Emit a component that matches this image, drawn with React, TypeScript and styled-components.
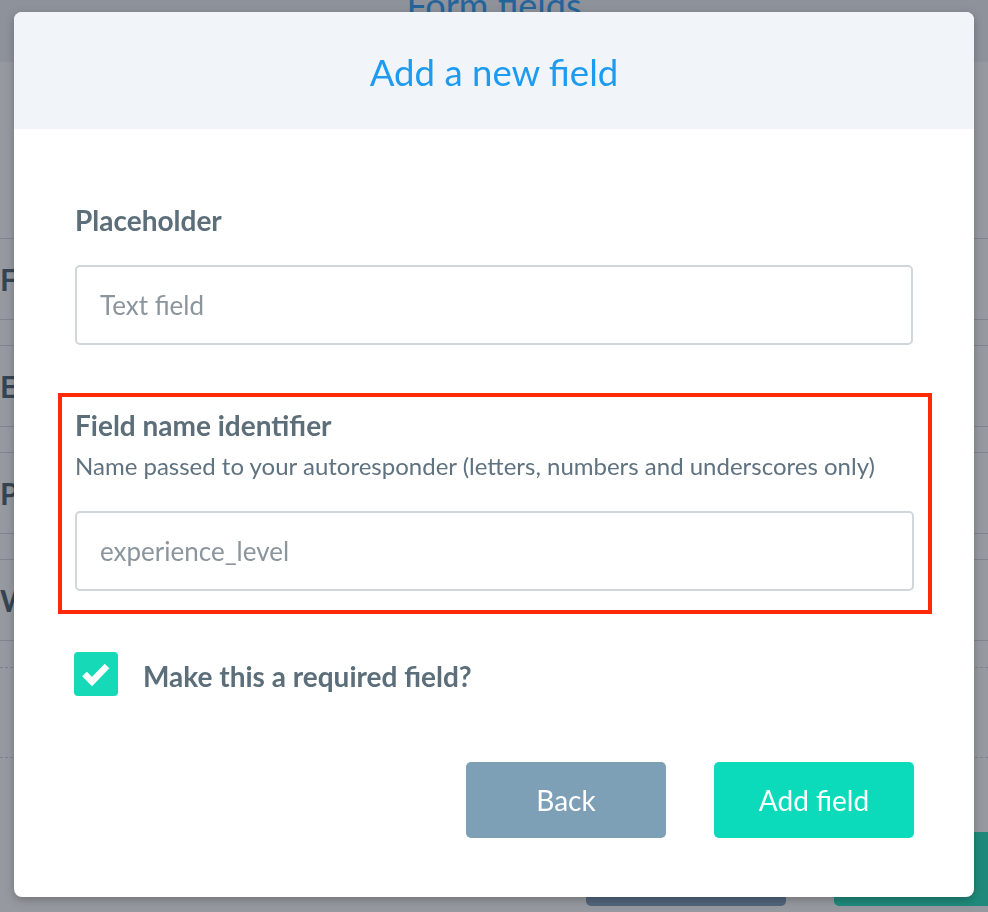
import React from "react";
import styled, { createGlobalStyle, css } from "styled-components";

const GlobalStyle = createGlobalStyle`
  html, body { margin: 0; padding: 0; }
  body {
    font-family: Lato, "Noto Sans", "Liberation Sans", sans-serif;
    background: #ffffff;
  }
  * { box-sizing: border-box; }
`;

/* ---------- page behind the dialog ---------- */

const Page = styled.div`
  position: relative;
  height: 912px;
  overflow: hidden;
  background: #ffffff;
  display: flex;
  flex-direction: column;
`;

const PageHeader = styled.header`
  height: 62px;
  flex: none;
  background: #eef2f7;
  display: flex;
  justify-content: center;
`;

const PageTitle = styled.h1`
  margin: -13px 0 0;
  font-size: 36px;
  line-height: 36px;
  font-weight: 400;
  color: #2a9cf5;
`;

const FieldList = styled.div`
  padding-top: 176px;
  display: flex;
  flex-direction: column;
  gap: 25px;
`;

const FieldRow = styled.div`
  height: 82px;
  border-top: 1px solid #d3d9df;
  border-bottom: 1px solid #d3d9df;
  display: flex;
  align-items: center;
  padding-left: 0;
  font-size: 30px;
  font-weight: 700;
  color: #4c5f6c;
  white-space: nowrap;
`;

const Dashed = styled.div<{ $gap: number }>`
  margin-top: ${(p) => p.$gap}px;
  border-top: 1px dashed #cfd5db;
`;

const PageActions = styled.div`
  margin-top: 74px;
  padding-left: 586px;
  display: flex;
  gap: 48px;
`;

const PageButton = styled.div<{ $tone: "slate" | "green" }>`
  flex: none;
  width: 200px;
  height: 74px;
  border-radius: 5px;
  background: ${(p) => (p.$tone === "slate" ? "#7d9eba" : "#1fe3bb")};
`;

/* ---------- dialog ---------- */

const Overlay = styled.div`
  position: fixed;
  inset: 0;
  background: rgba(32, 38, 50, 0.47);
  display: flex;
  justify-content: center;
  align-items: flex-start;
  padding-top: 12px;
`;

const Modal = styled.div`
  width: 960px;
  height: 885px;
  background: #ffffff;
  border-radius: 8px;
  overflow: hidden;
  box-shadow: 0 3px 10px rgba(0, 0, 0, 0.25);
  display: flex;
  flex-direction: column;
`;

const ModalHeader = styled.div`
  height: 117px;
  flex: none;
  background: #f1f5f9;
  display: flex;
  align-items: center;
  justify-content: center;
  padding-top: 2px;
`;

const ModalTitle = styled.h2`
  margin: 0;
  font-size: 36.6px;
  font-weight: 400;
  color: #1d9bf0;
`;

const ModalBody = styled.div`
  padding: 75px 61px 0;
  display: flex;
  flex-direction: column;
`;

const FieldLabel = styled.label`
  display: block;
  font-size: 28px;
  line-height: 32px;
  font-weight: 700;
  color: #5b6e79;
`;

const Hint = styled.p`
  margin: 10px 0 0;
  font-size: 24px;
  line-height: 29px;
  font-weight: 400;
  color: #5f7280;
`;

const TextInput = styled.input<{ $gap: number }>`
  display: block;
  width: 100%;
  height: 80px;
  margin-top: ${(p) => p.$gap}px;
  border: 2px solid #d1d6db;
  border-radius: 5px;
  padding: 0 23px;
  font-family: Lato, "Noto Sans", sans-serif;
  font-size: 26px;
  color: #5b6e79;
  background: #ffffff;
  outline: none;
  &::placeholder {
    color: #8b959d;
    opacity: 1;
  }
`;

const Highlight = styled.div`
  margin: 48px -19px 0 -17px;
  border: 4px solid #ff2b06;
  padding: 12px 14px 19px 13px;
`;

const CheckRow = styled.div`
  margin-top: 38px;
  margin-left: -1px;
  display: flex;
  align-items: center;
  gap: 25px;
`;

const CheckBox = styled.span`
  width: 44px;
  height: 44px;
  flex: none;
  border-radius: 4px;
  background: #16d9b8;
  display: flex;
  align-items: center;
  justify-content: center;
`;

const CheckLabel = styled.span`
  font-size: 28px;
  line-height: 32px;
  font-weight: 700;
  color: #5b6e79;
  padding-top: 3px;
`;

const Actions = styled.div`
  margin-top: 66px;
  margin-right: -1px;
  display: flex;
  justify-content: flex-end;
  gap: 48px;
`;

const Button = styled.button<{ $variant: "back" | "primary" }>`
  width: 200px;
  height: 76px;
  border: none;
  border-radius: 5px;
  font-family: Lato, "Noto Sans", sans-serif;
  font-size: 28px;
  font-weight: 400;
  color: #ffffff;
  cursor: pointer;
  ${(p) =>
    p.$variant === "back"
      ? css`
          background: #7ea0b7;
        `
      : css`
          background: #0bdbbb;
        `}
`;

export default function App() {
  return (
    <>
      <GlobalStyle />
      <Page>
        <PageHeader>
          <PageTitle>Form fields</PageTitle>
        </PageHeader>
        <FieldList>
          <FieldRow>Full name</FieldRow>
          <FieldRow>Email address</FieldRow>
          <FieldRow>Phone number</FieldRow>
          <FieldRow>Website</FieldRow>
        </FieldList>
        <Dashed $gap={26} />
        <Dashed $gap={89} />
        <PageActions>
          <PageButton $tone="slate" />
          <PageButton $tone="green" />
        </PageActions>
      </Page>

      <Overlay>
        <Modal role="dialog" aria-labelledby="dlg-title">
          <ModalHeader>
            <ModalTitle id="dlg-title">Add a new field</ModalTitle>
          </ModalHeader>
          <ModalBody>
            <FieldLabel htmlFor="ph">Placeholder</FieldLabel>
            <TextInput id="ph" $gap={29} placeholder="Text field" />

            <Highlight>
              <FieldLabel htmlFor="fid">Field name identifier</FieldLabel>
              <Hint>
                Name passed to your autoresponder (letters, numbers and
                underscores only)
              </Hint>
              <TextInput id="fid" $gap={31} placeholder="experience_level" />
            </Highlight>

            <CheckRow>
              <CheckBox>
                <svg width="44" height="44" viewBox="0 0 44 44" aria-hidden="true">
                  <polyline
                    points="10.5,22 18,29.5 33,14"
                    fill="none"
                    stroke="#ffffff"
                    strokeWidth="6.5"
                    strokeLinecap="butt"
                    strokeLinejoin="miter"
                  />
                </svg>
              </CheckBox>
              <CheckLabel>Make this a required field?</CheckLabel>
            </CheckRow>

            <Actions>
              <Button $variant="back">Back</Button>
              <Button $variant="primary">Add field</Button>
            </Actions>
          </ModalBody>
        </Modal>
      </Overlay>
    </>
  );
}
